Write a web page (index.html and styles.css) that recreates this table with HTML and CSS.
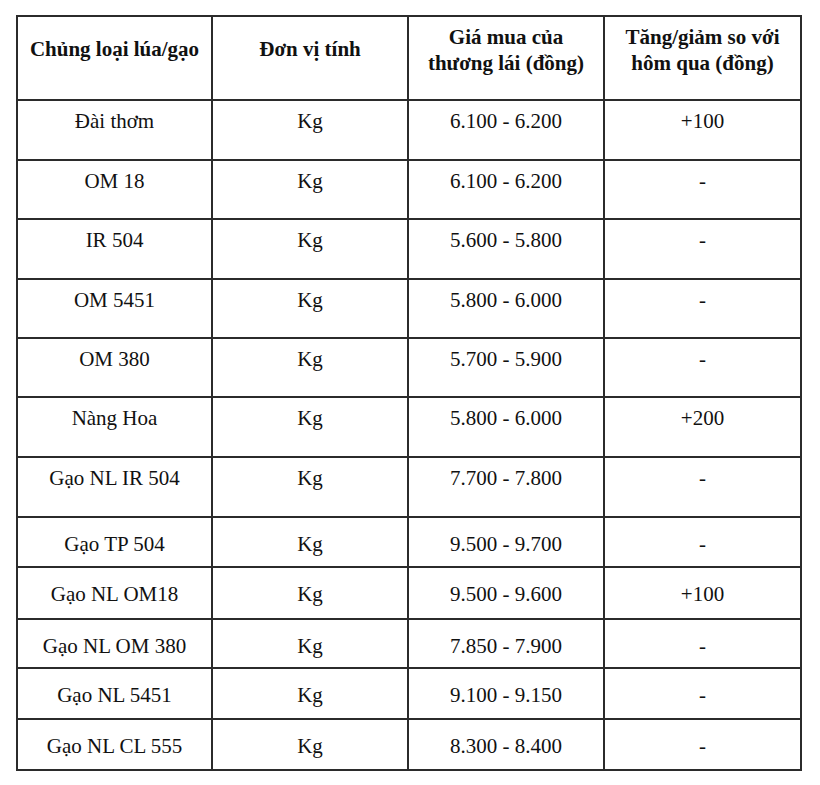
FILE: index.html
```html
<!DOCTYPE html>
<html lang="vi">
<head>
<meta charset="utf-8">
<title>Giá lúa gạo</title>
<link rel="stylesheet" href="styles.css">
</head>
<body>
<table class="price-table">
  <colgroup>
    <col class="c1"><col class="c2"><col class="c3"><col class="c4">
  </colgroup>
  <thead>
    <tr class="head">
      <th class="one">Chủng loại lúa/gạo</th>
      <th class="one">Đơn vị tính</th>
      <th>Giá mua của<br>thương lái (đồng)</th>
      <th>Tăng/giảm so với<br>hôm qua (đồng)</th>
    </tr>
  </thead>
  <tbody>
    <tr class="tall r60"><td>Đài thơm</td><td>Kg</td><td>6.100 - 6.200</td><td>+100</td></tr>
    <tr class="tall r59"><td>OM 18</td><td>Kg</td><td>6.100 - 6.200</td><td>-</td></tr>
    <tr class="tall r60"><td>IR 504</td><td>Kg</td><td>5.600 - 5.800</td><td>-</td></tr>
    <tr class="tall r59"><td>OM 5451</td><td>Kg</td><td>5.800 - 6.000</td><td>-</td></tr>
    <tr class="tall r59"><td>OM 380</td><td>Kg</td><td>5.700 - 5.900</td><td>-</td></tr>
    <tr class="tall r60"><td>Nàng Hoa</td><td>Kg</td><td>5.800 - 6.000</td><td>+200</td></tr>
    <tr class="tall r60"><td>Gạo NL IR 504</td><td>Kg</td><td>7.700 - 7.800</td><td>-</td></tr>
    <tr class="short r50"><td>Gạo TP 504</td><td>Kg</td><td>9.500 - 9.700</td><td>-</td></tr>
    <tr class="short r52"><td>Gạo NL OM18</td><td>Kg</td><td>9.500 - 9.600</td><td>+100</td></tr>
    <tr class="short r49"><td>Gạo NL OM 380</td><td>Kg</td><td>7.850 - 7.900</td><td>-</td></tr>
    <tr class="short r51"><td>Gạo NL 5451</td><td>Kg</td><td>9.100 - 9.150</td><td>-</td></tr>
    <tr class="short r51"><td>Gạo NL CL 555</td><td>Kg</td><td>8.300 - 8.400</td><td>-</td></tr>
  </tbody>
</table>
</body>
</html>
```

FILE: styles.css
```css
html, body {
  margin: 0;
  padding: 0;
  background: #ffffff;
}

body {
  padding: 15px 0 0 16px;
  font-family: "Liberation Serif", "Times New Roman", serif;
  color: #111111;
}

.price-table {
  border-collapse: collapse;
  table-layout: fixed;
  width: 784px;
  font-size: 21px;
  line-height: 26px;
}

.c1 { width: 195px; }
.c2 { width: 196px; }
.c3 { width: 196px; }
.c4 { width: 197px; }

.price-table th,
.price-table td {
  border: 2px solid #2b2b2b;
  text-align: center;
  vertical-align: top;
  padding: 0 4px;
  box-sizing: border-box;
}

.price-table th {
  font-weight: bold;
  padding-top: 7px;
}

.price-table th.one {
  padding-top: 19px;
}

.head { height: 84px; }

.tall td { padding-top: 7px; }
.short td { padding-top: 13px; }

.r60 { height: 60px; }
.r59 { height: 59px; }
.r52 { height: 52px; }
.r51 { height: 51px; }
.r50 { height: 50px; }
.r49 { height: 49px; }
```
